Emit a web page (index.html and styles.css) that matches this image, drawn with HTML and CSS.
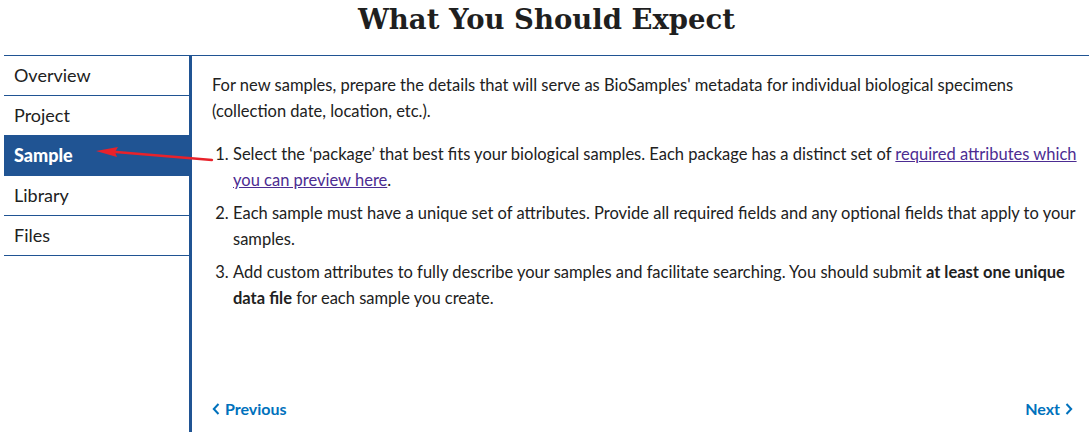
FILE: index.html
```html
<!DOCTYPE html>
<html lang="en">
<head>
<meta charset="utf-8">
<title>What You Should Expect</title>
<link rel="stylesheet" href="styles.css">
</head>
<body>
<div class="page">
  <h1 class="title">What You Should Expect</h1>
  <div class="panel">
    <nav class="sidenav">
      <a class="nav-item" href="#">Overview</a>
      <a class="nav-item" href="#">Project</a>
      <a class="nav-item active" href="#">Sample</a>
      <a class="nav-item" href="#">Library</a>
      <a class="nav-item" href="#">Files</a>
      <svg class="annot-arrow" width="120" height="20" viewBox="0 0 120 20">
        <path d="M118 14 L22 6" stroke="#e8222a" stroke-width="2.4" fill="none" stroke-linecap="round"/>
        <path d="M2 5 L24 1 L21 6 L23 11 Z" fill="#e8222a"/>
      </svg>
    </nav>
    <main class="content">
      <div class="text">
        <p class="intro">For new samples, prepare the details that will serve as BioSamples' metadata for individual biological specimens (collection date, location, etc.).</p>
        <ol class="steps">
          <li>Select the ‘package’ that best fits your biological samples. Each package has a distinct set of <a class="link" href="#">required attributes which</a> <a class="link" href="#">you can preview here</a>.</li>
          <li>Each sample must have a unique set of attributes. Provide all required fields and any optional fields that apply to your samples.</li>
          <li>Add custom attributes to fully describe your samples and facilitate searching. You should submit <strong>at least one unique</strong> <strong>data file</strong> for each sample you create.</li>
        </ol>
      </div>
      <div class="pager">
        <a class="pager-link" href="#"><svg class="chev" width="8" height="12" viewBox="0 0 8 12"><path d="M6.5 1 L1.8 6 L6.5 11" stroke="#0071bc" stroke-width="2" fill="none"/></svg>Previous</a>
        <a class="pager-link" href="#">Next<svg class="chev" width="8" height="12" viewBox="0 0 8 12"><path d="M1.5 1 L6.2 6 L1.5 11" stroke="#0071bc" stroke-width="2" fill="none"/></svg></a>
      </div>
    </main>
  </div>
</div>
</body>
</html>
```
FILE: styles.css
```css
html, body {
  margin: 0;
  padding: 0;
  background: #fff;
}
body {
  font-family: "Source Sans Pro", "Lato", "Noto Sans", sans-serif;
  color: #212121;
}
.page {
  padding-left: 4px;
  width: 1085px;
}
.title {
  margin: 0;
  font-family: "DejaVu Serif", "Liberation Serif", serif;
  font-weight: bold;
  font-size: 27.5px;
  line-height: 36px;
  padding-top: 1px;
  text-align: center;
  color: #1f1f1f;
  box-sizing: border-box;
  border-bottom: 1px solid #205493;
  height: 56px;
}
.panel {
  display: flex;
  height: 376px;
}
.sidenav {
  position: relative;
  width: 185px;
  flex: none;
  display: flex;
  flex-direction: column;
  border-right: 3px solid #205493;
}
.nav-item {
  display: block;
  height: 39px;
  line-height: 38px;
  padding-left: 10px;
  font-size: 18px;
  color: #212121;
  text-decoration: none;
  border-bottom: 1px solid #205493;
}
.nav-item.active {
  background: #205493;
  color: #fff;
  font-weight: 900;
}
.annot-arrow {
  position: absolute;
  left: 90px;
  top: 90px;
}
.content {
  flex: 1;
  display: flex;
  flex-direction: column;
  justify-content: space-between;
  padding: 16px 10px 14px 20px;
}
.text {
  font-size: 16.5px;
  line-height: 26px;
}
.intro {
  margin: 0 0 17px 0;
}
.steps {
  margin: 0;
  padding-left: 21px;
}
.steps li {
  margin-bottom: 7px;
}
.link {
  color: #4c2c92;
  text-decoration: underline;
}
.pager {
  display: flex;
  justify-content: space-between;
  padding-right: 6px;
}
.pager-link {
  display: flex;
  align-items: center;
  gap: 5px;
  font-size: 16px;
  font-weight: bold;
  color: #0071bc;
  text-decoration: none;
}
```
